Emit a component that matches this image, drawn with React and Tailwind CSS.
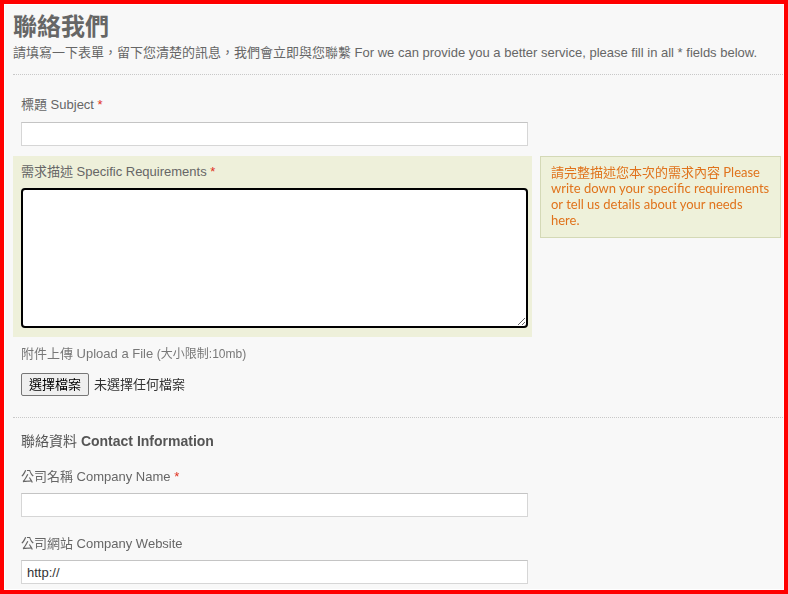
import React from "react";

const font = { fontFamily: '"Liberation Sans", Arial, "Noto Sans CJK TC", sans-serif' };

function Label({ text, required }) {
  return (
    <div className="text-[13px] leading-[16px] text-[#666]">
      {text}
      {required && <span className="text-[#e0301e]"> *</span>}
    </div>
  );
}

function TextInput({ value = "" }) {
  return (
    <input
      type="text"
      defaultValue={value}
      className="block w-[507px] h-[24px] bg-white border border-[#d6d6d6] border-t-[#c4c4c4] px-[5px] text-[13px] text-[#333] outline-none"
    />
  );
}

export default function App() {
  return (
    <div className="w-[788px] h-[594px] border-4 border-[#ff0000] bg-[#f8f8f8] overflow-hidden" style={font}>
      <div className="h-full border border-white">
        {/* header */}
        <div className="ml-[8px] pt-[7px] pb-[12px] border-b border-dotted border-[#c8c8c8]">
          <h1 className="text-[24px] leading-[30px] font-bold text-[#666]">聯絡我們</h1>
          <p className="mt-[2px] text-[13px] leading-[18px] text-[#666]">
            請填寫一下表單，留下您清楚的訊息，我們會立即與您聯繫 For we can provide you a better service, please fill in all * fields below.
          </p>
        </div>

        {/* subject */}
        <div className="ml-[8px] w-[519px] px-[8px] pt-[22px] mb-[10px]">
          <Label text="標題 Subject" required />
          <div className="mt-[9px]">
            <TextInput />
          </div>
        </div>

        {/* requirements + hint */}
        <div className="ml-[8px] flex items-start gap-[8px]">
          <div className="w-[519px] bg-[#eef0da] px-[8px] pt-[8px] pb-[9px]">
            <Label text="需求描述 Specific Requirements" required />
            <textarea
              autoFocus
              className="block mt-[8px] w-[507px] h-[140px] bg-white border-2 border-black rounded-[4px] outline-none resize"
            />
          </div>
          <div
            className="w-[241px] bg-[#eef1da] border border-[#d4d9b6] pl-[10px] pr-[8px] pt-[7px] pb-[9px] text-[13px] leading-[16px] text-[#e0731c]"
            style={{ fontFamily: 'Lato, "Noto Sans CJK TC", sans-serif' }}
          >
            請完整描述您本次的需求內容 Please write down your specific requirements or tell us details about your needs here.
          </div>
        </div>

        {/* upload */}
        <div className="ml-[8px] pl-[8px] pt-[9px] pb-[21px] border-b border-dotted border-[#c8c8c8]">
          <div className="text-[13px] leading-[16px] text-[#777]">
            附件上傳 Upload a File <span className="text-[12px]">(大小限制:10mb)</span>
          </div>
          <div className="mt-[11px] flex items-center gap-[5px]">
            <button className="h-[23px] px-[7px] bg-[#efefef] border border-[#767676] rounded-[2px] text-[13px] text-black leading-none">
              選擇檔案
            </button>
            <span className="text-[13px] text-[#333]">未選擇任何檔案</span>
          </div>
        </div>

        {/* contact */}
        <div className="ml-[8px] w-[519px] px-[8px]">
          <div className="mt-[14px] text-[14px] leading-[18px] text-[#555]">
            聯絡資料 <span className="font-bold">Contact Information</span>
          </div>
          <div className="mt-[19px]">
            <Label text="公司名稱 Company Name" required />
          </div>
          <div className="mt-[8px]">
            <TextInput />
          </div>
          <div className="mt-[19px]">
            <Label text="公司網站 Company Website" />
          </div>
          <div className="mt-[8px]">
            <TextInput value="http://" />
          </div>
        </div>
      </div>
    </div>
  );
}
